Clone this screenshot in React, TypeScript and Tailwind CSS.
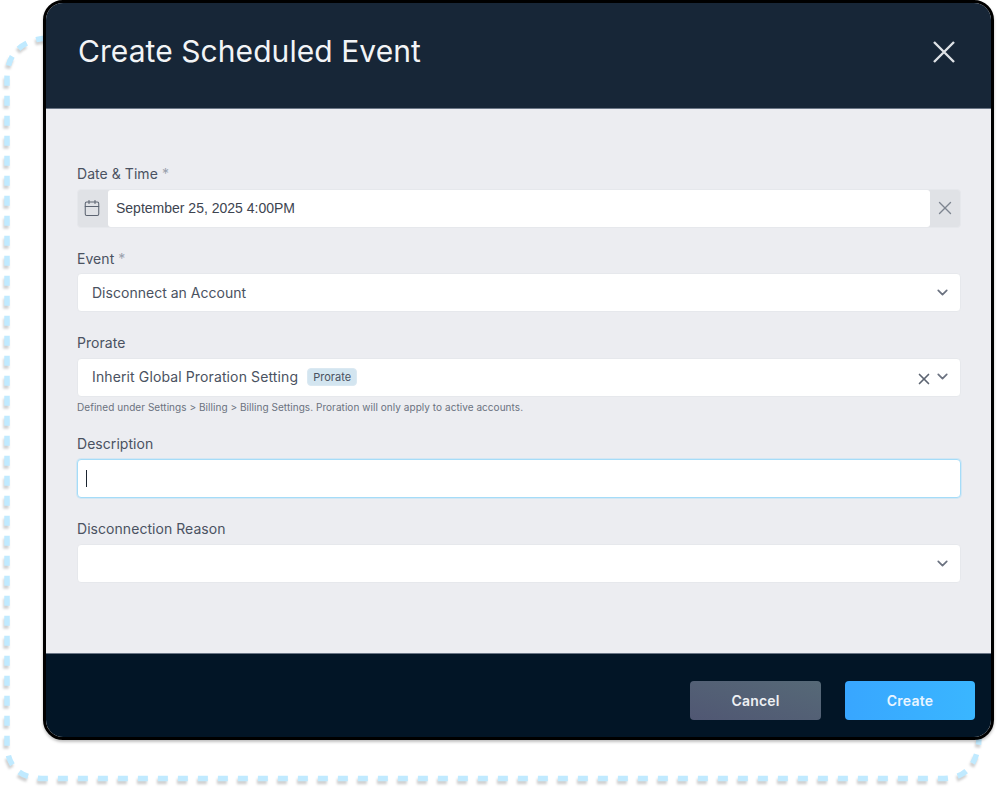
import { Calendar, ChevronDown, X } from "lucide-react";
import type { ReactNode } from "react";

const font = { fontFamily: "Inter, 'Noto Sans', sans-serif" };

function Field({ label, required, children }: { label: string; required?: boolean; children: ReactNode }) {
  return (
    <div className="mb-5">
      <label className="block h-5 mb-[5.5px] text-sm leading-[22px] tracking-[0.05px] text-[#4a5261]">
        {label}
        {required && <span className="ml-1 text-[#9aa1ad]">*</span>}
      </label>
      {children}
    </div>
  );
}

function SelectBox({ children, clearable }: { children?: ReactNode; clearable?: boolean }) {
  return (
    <div className="flex items-center h-[39px] pl-[14px] pr-[9px] bg-white rounded border border-[#e6e8ec] text-sm tracking-[0.02px] text-[#4a5261]">
      <div className="flex flex-1 items-center gap-[9px]">{children}</div>
      {clearable && <X className="w-[18px] h-[18px] mr-[1px] mt-[3px] text-[#5c6471]" strokeWidth={2.2} />}
      <ChevronDown className={clearable ? "w-[17px] h-[17px] -mt-[1px] text-[#6b7280]" : "w-[17px] h-[17px] text-[#6b7280]"} strokeWidth={2.4} />
    </div>
  );
}

export default function App() {
  return (
    <div className="relative w-[998px] h-[789px] bg-white overflow-hidden" style={font}>
      {/* dashed trail behind the modal */}
      <svg className="absolute inset-0" width="998" height="789" fill="none">
        <path
          d="M46 38 C24 40 7 52 7 78 V744 C7 766 20 778.5 42 778.5 H944 C964 778.5 978 766 979 738"
          stroke="#c0eaff"
          strokeWidth="5.5"
          strokeDasharray="10 10"
          style={{ filter: "drop-shadow(-1px 3px 1px rgba(0,0,0,0.18))" }}
        />
      </svg>

      <div className="relative ml-[43px] w-[951px] h-[740px] flex flex-col rounded-[20px] border-[3px] border-black overflow-hidden shadow-[0_2px_3px_rgba(0,0,0,0.25)]">
        <header className="flex h-[106px] shrink-0 items-start justify-between pl-[32px] pr-[36px] pt-[28px] bg-[#172637] border-b border-[#6b7686]">
          <h1 className="text-[30px] leading-10 font-normal tracking-[0.07px] text-[#f2f4f6]">Create Scheduled Event</h1>
          <svg width="22" height="22" viewBox="0 0 22 22" fill="none" className="mt-[10px] text-[#dfe2e6]">
            <path d="M1 1L21 21M21 1L1 21" stroke="currentColor" strokeWidth="2.4" />
          </svg>
        </header>

        <main className="flex-1 pl-[31px] pr-[30px] pt-[54px] bg-[#ecedf1]">
          <Field label="Date & Time" required>
            <div className="flex h-[39px] rounded border border-[#e6e8ec] bg-[#e0e2e6]">
              <div className="flex w-[30px] items-center justify-center">
                <Calendar className="w-[18px] h-[18px] mr-[2px] text-[#5c6471]" strokeWidth={1.4} />
              </div>
              <div className="flex flex-1 items-center pl-2 bg-white rounded-[3px] text-sm text-[#3d4450]" style={{ fontFamily: "'Liberation Sans', Arial, sans-serif" }}>
                September 25, 2025 4:00PM
              </div>
              <div className="flex w-[30px] items-center justify-center">
                <X className="w-[22px] h-[22px] text-[#7d8590]" strokeWidth={1.5} />
              </div>
            </div>
          </Field>

          <Field label="Event" required>
            <SelectBox>Disconnect an Account</SelectBox>
          </Field>

          <div className="mb-5">
            <label className="block h-5 mb-[5.5px] text-sm leading-[22px] tracking-[0.05px] text-[#4a5261]">Prorate</label>
            <SelectBox clearable>
              <span className="tracking-[0.12px]">Inherit Global Proration Setting</span>
              <span className="px-[5px] h-[18px] leading-[17px] rounded bg-[#d3e5f0] border border-[#dbe9f2] text-[11px] text-[#4a5261]">Prorate</span>
            </SelectBox>
            <p className="h-[16.5px] pt-[4px] text-[10px] leading-[13px] tracking-[0.05px] text-[#6b7280]">
              {"Defined under Settings > Billing > Billing Settings. Proration will only apply to active accounts."}
            </p>
          </div>

          <div className="mb-[20.5px]">
            <label className="block h-5 mb-[5.5px] text-sm leading-[22px] tracking-[0.05px] text-[#4a5261]">Description</label>
            <div className="flex items-center h-[39px] pl-2 bg-white rounded border border-[#a5dcf8] shadow-[0_0_0_1px_rgba(165,220,248,0.35)]">
              <span className="block w-px h-[17px] bg-[#1b2430]" />
            </div>
          </div>

          <Field label="Disconnection Reason">
            <SelectBox />
          </Field>
        </main>

        <footer className="flex h-[84px] shrink-0 items-start justify-end gap-6 pr-4 pt-[27px] bg-[#021526] border-t border-[#6b7686]">
          <button className="w-[131px] h-[39px] rounded bg-gradient-to-tr from-[#505773] to-[#566977] text-sm font-semibold tracking-[0.2px] text-[#eef0f3]">Cancel</button>
          <button className="w-[130px] h-[39px] rounded bg-gradient-to-r from-[#38a6ff] to-[#3ab6ff] text-sm font-semibold tracking-[0.2px] text-[#e8f5ff]">Create</button>
        </footer>
      </div>
    </div>
  );
}
